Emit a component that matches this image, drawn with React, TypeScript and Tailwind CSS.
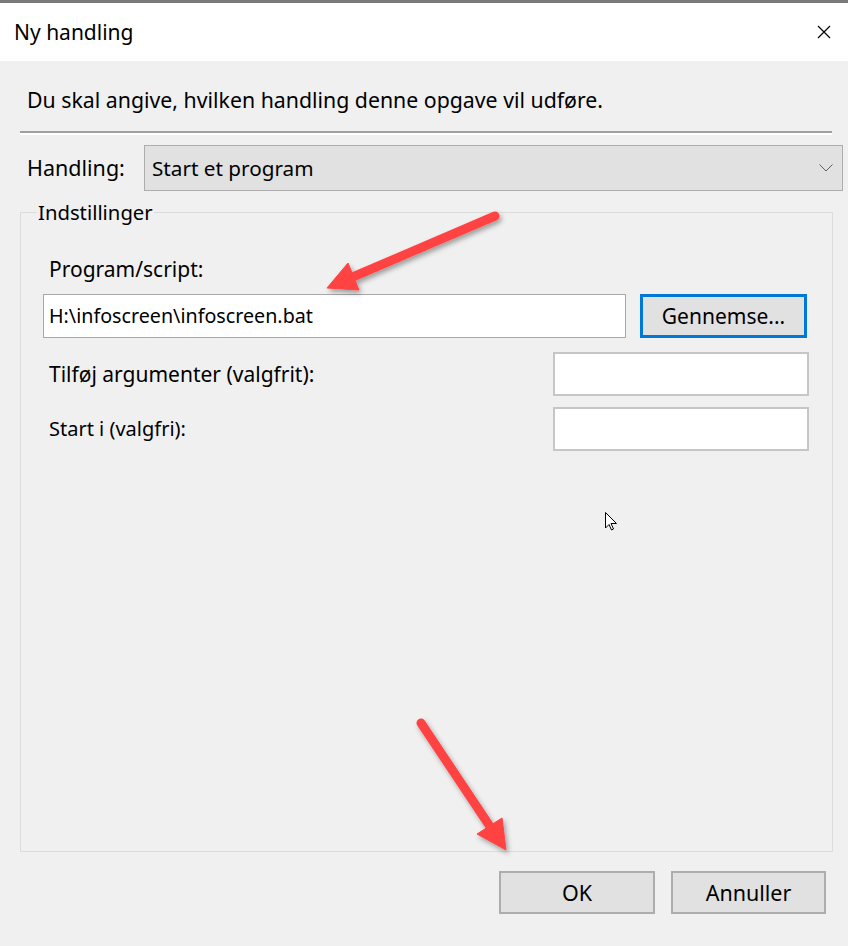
import React from "react";

const FONT = "font-['Segoe_UI','Noto_Sans',sans-serif]";

function TextBox({ className, value }: { className: string; value?: string }) {
  return (
    <div className={`flex items-center bg-white ${className}`}>
      {value ? <span className="pl-[5px] text-[19.7px] leading-[26px] text-black">{value}</span> : null}
    </div>
  );
}

function DialogButton({ label, width }: { label: string; width: string }) {
  return (
    <button
      type="button"
      className={`flex h-[43px] ${width} items-center justify-center border-2 border-[#adadad] bg-[#e1e1e1] text-[21.5px] leading-[26px] text-black`}
    >
      {label}
    </button>
  );
}

function Overlay() {
  return (
    <svg className="pointer-events-none absolute inset-0" width="848" height="946" viewBox="0 0 848 946">
      <defs>
        <filter id="shadow" x="-20%" y="-20%" width="140%" height="140%">
          <feDropShadow dx="2" dy="3" stdDeviation="2.5" floodColor="#000" floodOpacity="0.35" />
        </filter>
      </defs>
      <g filter="url(#shadow)" fill="#ff4343" stroke="#ff4343">
        <line x1="495" y1="216" x2="348" y2="279" strokeWidth="9" strokeLinecap="round" />
        <polygon points="327,288 348,263 359,290" strokeWidth="1" strokeLinejoin="round" />
        <line x1="421" y1="723" x2="491" y2="828" strokeWidth="9" strokeLinecap="round" />
        <polygon points="506,850 477,834 502,818" strokeWidth="1" strokeLinejoin="round" />
      </g>
      <polygon points="605.5,512.5 605.5,528 609,524.5 611.5,530 613.5,529 611,523.5 616.5,523.5" fill="#fff" stroke="#000" strokeWidth="1" />
    </svg>
  );
}

export default function App() {
  return (
    <div className={`relative h-[946px] w-[848px] overflow-hidden bg-[#f0f0f0] text-black ${FONT}`}>
      <div className="border-t-[3px] border-[#7a7a7a]">
        <div className="flex h-[58px] items-center justify-between bg-white pl-[14px] pr-[16px]">
          <span className="text-[21px] leading-[30px]">Ny handling</span>
          <svg width="14" height="14" viewBox="0 0 14 14" className="mr-[1px]">
            <path d="M1 1 L13 13 M13 1 L1 13" stroke="#000" strokeWidth="1.2" fill="none" />
          </svg>
        </div>
      </div>

      <div className="px-[20px]">
        <p className="pl-[7px] pt-[26px] text-[21.3px] leading-[26px]">
          Du skal angive, hvilken handling denne opgave vil udføre.
        </p>

        <div className="mt-[18px] w-[812px]">
          <div className="h-[2px] bg-[#a0a0a0]" />
          <div className="h-[2px] bg-white" />
        </div>

        <div className="mt-[10px] flex h-[46px] items-center">
          <span className="w-[124px] shrink-0 pl-[7px] text-[21.5px] leading-[26px]">Handling:</span>
          <div className="flex h-[46px] w-[699px] shrink-0 items-center justify-between border border-[#adadad] bg-[#e1e1e1] pl-[7px] pr-[9px]">
            <span className="text-[20.7px] leading-[26px]">Start et program</span>
            <svg width="14" height="8" viewBox="0 0 14 8">
              <path d="M0.5 0.5 L7 7 L13.5 0.5" stroke="#606060" strokeWidth="1" fill="none" />
            </svg>
          </div>
        </div>

        <fieldset className="mt-[8px] h-[653px] w-[813px] border border-[#dcdcdc]">
          <legend className="ml-[16px] px-[1px] text-[20.3px] leading-[26px]">Indstillinger</legend>

          <p className="pl-[28px] pt-[31px] text-[21px] leading-[26px]">Program/script:</p>

          <div className="mt-[12px] flex items-center pl-[22px]">
            <TextBox className="h-[44px] w-[583px] border border-[#a8a8a8]" value="H:\infoscreen\infoscreen.bat" />
            <button
              type="button"
              className="ml-[14px] flex h-[44px] w-[167px] items-center justify-center border-[3px] border-[#0078d7] bg-[#e1e1e1] text-[21px] leading-[26px]"
            >
              Gennemse...
            </button>
          </div>

          <div className="mt-[14px] flex items-center justify-between pl-[28px] pr-[23px]">
            <span className="text-[21px] leading-[26px]">Tilføj argumenter (valgfrit):</span>
            <TextBox className="h-[44px] w-[256px] border-2 border-[#c6c6c6]" />
          </div>

          <div className="mt-[11px] flex items-center justify-between pl-[28px] pr-[23px]">
            <span className="text-[20px] leading-[26px]">Start i (valgfri):</span>
            <TextBox className="h-[44px] w-[256px] border-2 border-[#c6c6c6]" />
          </div>
        </fieldset>
      </div>

      <div className="mt-[19px] flex justify-end gap-[16px] pr-[22px]">
        <DialogButton label="OK" width="w-[156px]" />
        <DialogButton label="Annuller" width="w-[155px]" />
      </div>

      <Overlay />
    </div>
  );
}
